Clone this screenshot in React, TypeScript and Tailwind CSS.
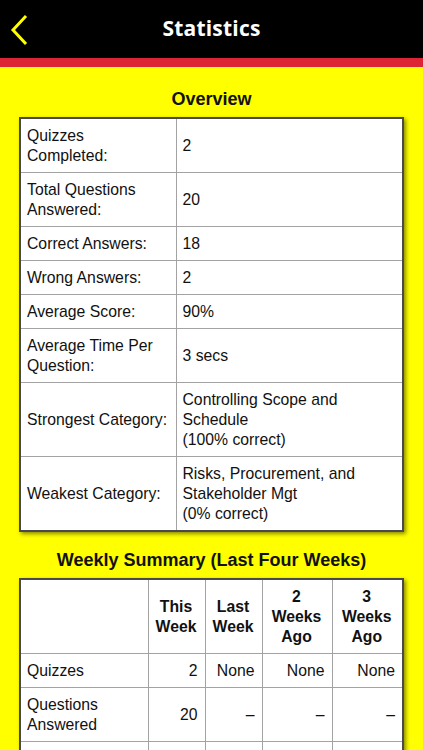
import React from "react";

const overview: { label: React.ReactNode; value: React.ReactNode }[] = [
  { label: <>Quizzes<br />Completed:</>, value: "2" },
  { label: <>Total Questions<br />Answered:</>, value: "20" },
  { label: "Correct Answers:", value: "18" },
  { label: "Wrong Answers:", value: "2" },
  { label: "Average Score:", value: "90%" },
  { label: <>Average Time Per<br />Question:</>, value: "3 secs" },
  { label: "Strongest Category:", value: <>Controlling Scope and<br />Schedule<br />(100% correct)</> },
  { label: "Weakest Category:", value: <>Risks, Procurement, and<br />Stakeholder Mgt<br />(0% correct)</> },
];

const weekly: { label: string; values: string[] }[] = [
  { label: "Quizzes", values: ["2", "None", "None", "None"] },
  { label: "Questions Answered", values: ["20", "–", "–", "–"] },
  { label: "Correct Answers", values: ["18", "–", "–", "–"] },
  { label: "Average Score", values: ["90%", "–", "–", "–"] },
];

const cell = "border border-[#a3a3a3] pl-[6px] pr-[7px] pt-[7px] pb-[6px] leading-[20px] align-middle";

export default function App() {
  return (
    <div className="min-h-[750px] bg-[#ffff00] font-['Liberation_Sans',Arial,sans-serif] text-[#111]">
      {/* top bar */}
      <div className="relative h-[58px] bg-black flex items-center justify-center">
        <svg className="absolute left-[9px] top-[14px]" width="22" height="32" viewBox="0 0 22 32" fill="none">
          <polyline points="16,3 4,16 16,29" stroke="#ffff00" strokeWidth="3" strokeLinecap="square" />
        </svg>
        <h1 className="text-white text-[21px] font-bold font-['Open_Sans',sans-serif] tracking-[0.2px]">Statistics</h1>
      </div>
      <div className="h-[9px] bg-[#dc2434]" />

      <div className="px-[19px] pt-[21px] pb-6">
        <h2 className="text-center text-[18px] leading-[22px] font-bold mb-[7px]">Overview</h2>
        <div className="bg-white shadow-[2px_2px_4px_rgba(0,0,0,0.45)]">
          <table className="w-full table-fixed border-collapse border-2 border-[#4a4a4a] text-[15.75px]">
            <colgroup>
              <col className="w-[156px]" />
              <col />
            </colgroup>
            <tbody>
              {overview.map((r, i) => (
                <tr key={i}>
                  <td className={cell}>{r.label}</td>
                  <td className={cell}>{r.value}</td>
                </tr>
              ))}
            </tbody>
          </table>
        </div>

        <h2 className="text-center text-[18px] leading-[22px] font-bold mt-[17px] mb-[7px]">Weekly Summary (Last Four Weeks)</h2>
        <div className="bg-white shadow-[2px_2px_4px_rgba(0,0,0,0.45)]">
          <table className="w-full table-fixed border-collapse border-2 border-[#4a4a4a] text-[15.75px]">
            <colgroup>
              <col className="w-[128px]" />
              <col className="w-[57px]" />
              <col className="w-[57px]" />
              <col className="w-[70px]" />
              <col />
            </colgroup>
            <thead>
              <tr>
                <th className={cell}></th>
                <th className={`${cell} text-center font-bold`}>This Week</th>
                <th className={`${cell} text-center font-bold`}>Last Week</th>
                <th className={`${cell} text-center font-bold`}>2 Weeks Ago</th>
                <th className={`${cell} text-center font-bold`}>3 Weeks Ago</th>
              </tr>
            </thead>
            <tbody>
              {weekly.map((r) => (
                <tr key={r.label}>
                  <td className={cell}>{r.label}</td>
                  {r.values.map((v, j) => (
                    <td key={j} className={`${cell} text-right`}>{v}</td>
                  ))}
                </tr>
              ))}
            </tbody>
          </table>
        </div>
      </div>
    </div>
  );
}
